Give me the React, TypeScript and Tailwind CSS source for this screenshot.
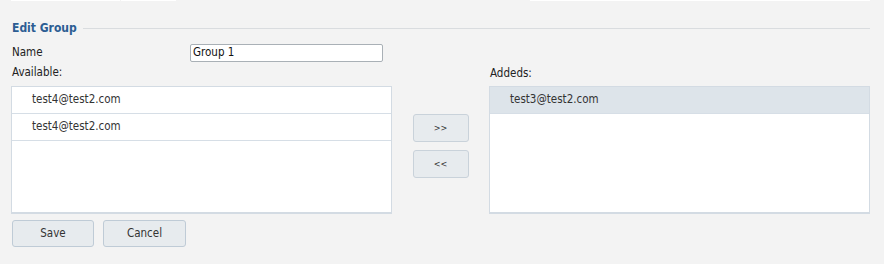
import React from "react";

const font = { fontFamily: '"DejaVu Sans Condensed", "DejaVu Sans", Verdana, sans-serif' };

function Row({ text, selected }: { text: string; selected?: boolean }) {
  return (
    <div
      className={
        "h-[27px] flex items-center pl-[20px] border-b border-[#d6dee6] text-[11.5px] text-[#333] " +
        (selected ? "bg-[#dde4ea]" : "bg-white")
      }
    >
      {text}
    </div>
  );
}

export default function App() {
  return (
    <div className="w-[884px] h-[264px] bg-[#f3f3f3] overflow-hidden" style={font}>
      <div className="flex h-px">
        <div className="ml-[11px] w-[109px] bg-white" />
        <div className="ml-px w-[55px] bg-white" />
        <div className="ml-[354px] w-[340px] bg-white" />
      </div>
      <div className="flex items-center h-[12px] mt-[21px] pl-[12px] pr-[14px]">
        <span className="text-[12px] font-bold text-[#2c5d93] leading-none">Edit Group</span>
        <div className="ml-[6px] flex-1 h-px bg-[#d9dcdf]" />
      </div>
      <div className="flex items-center mt-[10px] pl-[12px] h-[18px]">
        <span className="w-[178px] text-[11.5px] text-[#222]">Name</span>
        <div className="w-[193px] h-[18px] bg-white border border-[#a9b0b6] rounded-[2px] flex items-center pl-[2px] text-[11.5px] text-[#111]">
          Group 1
        </div>
      </div>
      <div className="flex items-center mt-[2px] h-[18px] text-[11.5px] text-[#222]">
        <span className="pl-[12px] w-[490px]">Available:</span>
        <span className="mt-[2px]">Addeds:</span>
      </div>
      <div className="flex mt-[4px] pl-[11px] h-[128px]">
        <div className="w-[381px] h-[128px] bg-white border border-[#d3dbe3] border-b-2">
          <Row text="test4@test2.com" />
          <Row text="test4@test2.com" />
        </div>
        <div className="w-[97px] flex flex-col items-center pt-[28px] gap-[8px]">
          <button className="w-[56px] h-[28px] bg-[#e7ebee] border border-[#c9d2da] rounded-[3px] text-[9px] text-[#333] leading-none">
            &gt;&gt;
          </button>
          <button className="w-[56px] h-[28px] bg-[#e7ebee] border border-[#c9d2da] rounded-[3px] text-[9px] text-[#333] leading-none">
            &lt;&lt;
          </button>
        </div>
        <div className="w-[381px] h-[128px] bg-white border border-[#d3dbe3] border-b-2">
          <Row text="test3@test2.com" selected />
        </div>
      </div>
      <div className="flex gap-[9px] mt-[6px] pl-[12px]">
        <button className="w-[82px] h-[27px] bg-[#e7ebee] border border-[#bfcbd6] rounded-[3px] text-[11.5px] text-[#333]">
          Save
        </button>
        <button className="w-[83px] h-[27px] bg-[#e7ebee] border border-[#bfcbd6] rounded-[3px] text-[11.5px] text-[#333]">
          Cancel
        </button>
      </div>
    </div>
  );
}
